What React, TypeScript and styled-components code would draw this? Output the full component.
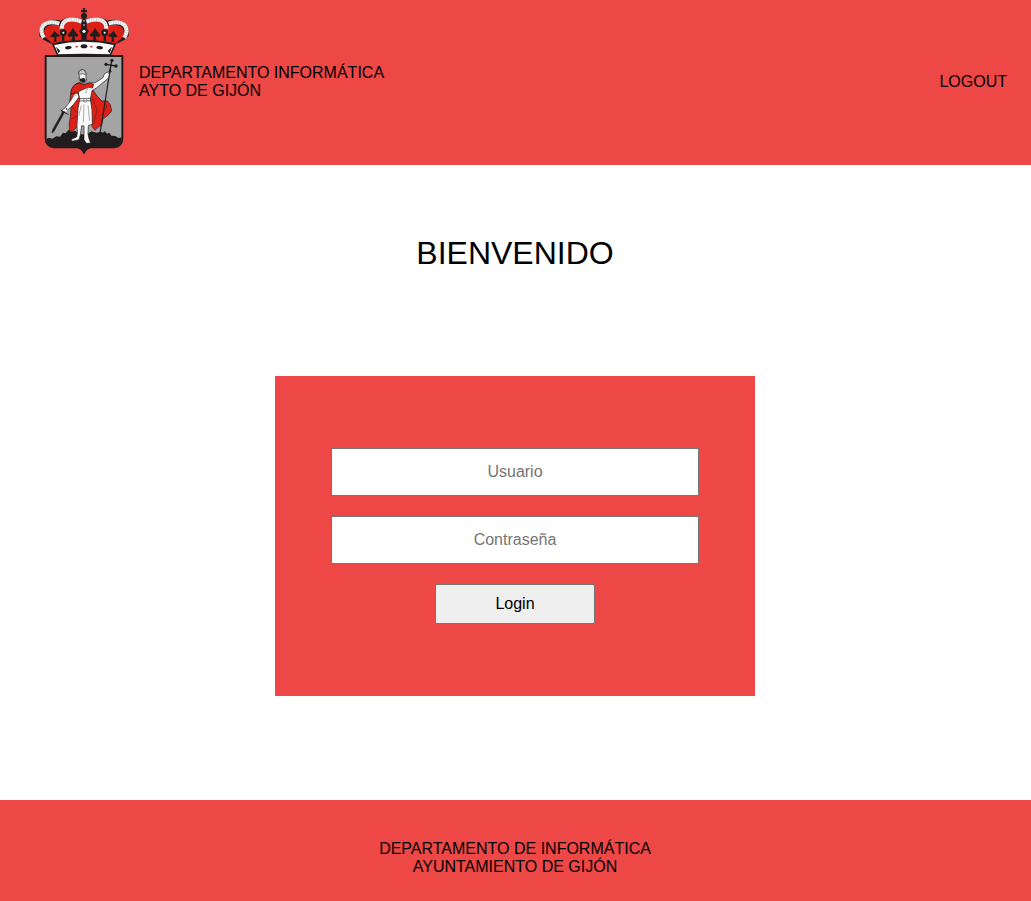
import React from 'react';
import styled, { createGlobalStyle } from 'styled-components';

const GlobalStyle = createGlobalStyle`
  * { box-sizing: border-box; }
  body {
    margin: 0;
    background: #fff;
    color: #000;
    font: 16px/18px "Liberation Sans", Arial, sans-serif;
  }
`;

const Page = styled.div`
  display: flex;
  flex-direction: column;
  height: 901px;
`;

const Header = styled.header`
  display: flex;
  align-items: center;
  height: 165px;
  padding: 0 24px 0 34px;
  background: #ed4746;
`;

const Crest = styled.svg`
  display: block;
  width: 100px;
  height: 156px;
  margin: 0 5px 1px 0;
`;

const Department = styled.div`
  flex: 1;
  padding-bottom: 2px;
`;

const Logout = styled.a`
  padding-bottom: 2px;
  color: #000;
`;

const Main = styled.main`
  display: flex;
  flex: 1;
  flex-direction: column;
  align-items: center;
  padding-right: 1px;
`;

const Title = styled.h1`
  margin: 70px 0 104px;
  font-size: 32px;
  font-weight: 400;
  line-height: 37px;
`;

const LoginForm = styled.form`
  display: flex;
  flex-direction: column;
  align-items: center;
  justify-content: center;
  gap: 20px;
  width: 480px;
  height: 320px;
  background: #ed4746;
`;

const Field = styled.input`
  width: 368px;
  height: 48px;
  padding: 0;
  border: 1px solid #767676;
  border-radius: 0;
  background: #fff;
  font: inherit;
  text-align: center;
  &::placeholder { color: #757575; opacity: 1; }
`;

const Submit = styled.button`
  width: 160px;
  height: 40px;
  padding: 0;
  border: 1px solid #767676;
  border-radius: 2px;
  background: #efefef;
  color: #000;
  font: inherit;
`;

const Footer = styled.footer`
  height: 101px;
  padding: 40px 1px 0 0;
  background: #ed4746;
  text-align: center;
`;

const INK = '#211d1e';
const RED = '#dc2118';

function CityCrest() {
  return (
    <Crest viewBox="0 0 300 468" role="img" aria-label="Escudo de Gijón">
      {/* Crown */}
      <path d="M60 121Q25 110 16 95Q12 64 35 52Q55 43 80 50Q105 34 139 44H161Q195 34 220 50Q245 43 265 52Q288 64 284 95Q275 110 240 121Q150 103 60 121Z" fill={INK} />
      <path d="M57 119L33 100Q25 78 40 67Q57 58 79 67Q88 54 108 52Q128 49 142 57V109Q91 109 57 119ZM243 119L267 100Q275 78 260 67Q243 58 221 67Q212 54 192 52Q172 49 158 57V109Q209 109 243 119Z" fill={RED} />
      <g fill="none">
        <path d="M29 101Q16 78 28 64Q44 49 76 59M271 101Q284 78 272 64Q256 49 224 59M83 74Q83 55 98 49Q118 42 143 53M217 74Q217 55 202 49Q182 42 157 53" stroke="#f7f2f2" strokeWidth="12" />
        <path d="M29 101Q16 78 28 64Q44 49 76 59M271 101Q284 78 272 64Q256 49 224 59M83 74Q83 55 98 49Q118 42 143 53M217 74Q217 55 202 49Q182 42 157 53" stroke="#bcb3b3" strokeWidth="12" strokeDasharray="1.5 6" />
      </g>
      <g fill={INK}>
        <path d="M61 80Q56 90 49 97Q58 103 61 98L60 114H67V98Q74 102 78 93Q68 90 61 80ZM116 72Q111 83 104 89Q99 98 108 99L115 96L112 110H124L121 96Q130 101 133 93Q125 86 116 72ZM239 80Q244 90 251 97Q242 103 239 98L240 114H233V98Q226 102 222 93Q232 90 239 80ZM184 72Q189 83 196 89Q201 98 192 99L185 96L188 110H176L179 96Q170 101 167 93Q175 86 184 72Z" />
        <path d="M145 48H155V70L165 82L154 96V108H146V96L135 82L145 70Z" />
        <circle cx="88" cy="86" r="10" /><circle cx="212" cy="86" r="10" />
        <path d="M84 94H91V111H84ZM209 94H216V111H209Z" />
        <circle cx="150" cy="36" r="9" />
        <path d="M147 32L148 24L141 25V17L148 19L146 12H154L152 19L159 17V25L152 24L153 32Z" />
      </g>
      <g fill="#eee"><circle cx="88" cy="86" r="3" /><circle cx="212" cy="86" r="3" /><circle cx="150" cy="82" r="5" /><circle cx="150" cy="51" r="2.5" /><circle cx="150" cy="63" r="2.5" /></g>
      <path d="M57 121Q150 101 243 121L229 153Q150 151 71 153Z" fill="#fafafa" stroke={INK} strokeWidth="5" strokeLinejoin="round" />
      <g fill={INK}>
        <ellipse cx="150" cy="127" rx="10" ry="6" />
        <ellipse cx="103" cy="131" rx="10" ry="5" transform="rotate(-7 103 131)" />
        <ellipse cx="197" cy="131" rx="10" ry="5" transform="rotate(7 197 131)" />
        <path d="M66 128L79 141L73 148ZM234 128L221 141L227 148Z" />
      </g>
      <path d="M128 125l5 3-5 3-5-3zM172 125l5 3-5 3-5-3z" fill="#b83a34" />

      {/* Shield and hills */}
      <path d="M35 156H265V404Q265 426 240 430H169Q155 434 150 447Q145 434 131 430H60Q35 426 35 404Z" fill="#a5a4a5" stroke={INK} strokeWidth="6" strokeLinejoin="round" />
      <path d="M37 404L45 401L55 404L67 397L78 398L87 386L95 388L103 378L112 383L124 380L135 391H160L172 382L187 386L201 383L207 386L212 381L219 389L226 386L232 395L244 396L253 402L263 400V407Q261 425 240 430H169Q155 434 150 447Q145 434 131 430H60Q38 427 37 404Z" fill={INK} />

      {/* Cape */}
      <path d="M137 235Q116 240 111 263L107 292L111 316L109 338L106 358V381Q116 386 127 370L137 357V269H169L174 367L183 379L193 369L203 363L207 345L224 332L233 321L229 302L220 291L204 291L190 277L176 257L163 239L146 242Z" fill={RED} stroke={INK} strokeWidth="2" strokeLinejoin="round" />
      <path d="M114 305L127 326M113 344L129 336M176 285L189 318L179 360M219 302Q214 320 205 331" fill="none" stroke="#761812" strokeWidth="2" />

      {/* Staff */}
      <path d="M231 181L198 388" fill="none" stroke={INK} strokeWidth="3.5" />
      <path d="M215 181L247 186M233 168L228 201" fill="none" stroke={INK} strokeWidth="4" />
      <g fill={INK}><circle cx="234" cy="169" r="5" /><circle cx="216" cy="181" r="5" /><circle cx="246" cy="186" r="5" /><circle cx="228" cy="202" r="4" /></g>

      {/* Figure */}
      <g stroke={INK} strokeWidth="2" strokeLinejoin="round">
        <path d="M139 238L156 244L169 235L182 237L207 221L211 210L220 204L226 210L223 222L214 230L187 252L174 260L169 286L174 318L175 360L163 365L162 390L165 405L170 417L157 418L150 407L150 366L143 365L139 393L135 407L114 412L112 406L128 399L130 387L129 364L132 314L137 286L131 255Z" fill="#fafafa" />
        <path d="M129 263L118 274L112 287Q104 298 93 312L83 319L87 327L99 320L118 302L135 279Z" fill="#fafafa" />
        <path d="M111 264Q116 238 137 238L150 242L166 236L179 241L176 252Q162 247 151 255Q137 259 129 268Q119 264 111 270Z" fill={RED} />
        <path d="M136 216L133 204Q137 197 145 197Q156 198 156 207V220Q160 228 154 235Q147 240 139 233Q134 227 136 216Z" fill="#f1f1f1" />
      </g>
      <path d="M134 207Q136 197 146 197Q156 199 155 209L154 213L147 209L137 211Z" fill="#c8c8c8" stroke={INK} strokeWidth="1.5" />
      <path d="M137 220L140 225L147 222L154 224L155 230Q151 238 144 235L138 230Z" fill={INK} />
      <path d="M134 284L171 283M135 291L170 290" fill="none" stroke={INK} strokeWidth="2" />
      <path d="M149 284H158V294H149ZM117 280L127 271M163 250L154 268M142 304L134 336M150 301L148 355M162 304L167 350" fill="none" stroke="#858181" strokeWidth="2" />

      {/* Sword */}
      <path d="M91 324L87 333L60 382L54 387L56 377L82 331L86 321Z" fill={INK} stroke={INK} strokeWidth="2" />
      <path d="M80 318L103 332M99 312L90 327" fill="none" stroke={INK} strokeWidth="3" />
      <path d="M90 317L98 322" fill="none" stroke="#f5f5f5" strokeWidth="6" />
    </Crest>
  );
}

export default function App() {
  return (
    <>
      <GlobalStyle />
      <Page>
        <Header>
          <CityCrest />
          <Department>DEPARTAMENTO INFORMÁTICA<br />AYTO DE GIJÓN</Department>
          <Logout>LOGOUT</Logout>
        </Header>
        <Main>
          <Title>BIENVENIDO</Title>
          <LoginForm onSubmit={(event) => event.preventDefault()}>
            <Field type="text" placeholder="Usuario" aria-label="Usuario" />
            <Field type="password" placeholder="Contraseña" aria-label="Contraseña" />
            <Submit type="submit">Login</Submit>
          </LoginForm>
        </Main>
        <Footer>DEPARTAMENTO DE INFORMÁTICA<br />AYUNTAMIENTO DE GIJÓN</Footer>
      </Page>
    </>
  );
}
